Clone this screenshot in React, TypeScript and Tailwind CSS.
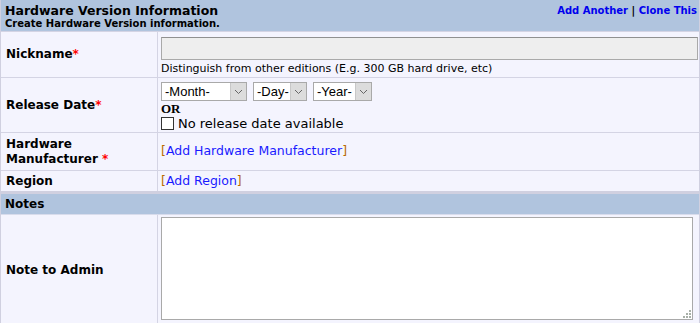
import React from "react";

const V = { fontFamily: '"DejaVu Sans", Verdana, sans-serif' };
const A = { fontFamily: '"Liberation Sans", Arial, sans-serif' };

function Sel({ label, w }: { label: string; w: number }) {
  return (
    <div className="flex h-[19px] border border-[#a9a9a9] bg-white" style={{ width: w }}>
      <div className="flex-1 pl-[3px] text-[13px] leading-[17px] text-black" style={A}>{label}</div>
      <div className="w-[16px] h-full bg-[#dcdcdc] border-l border-[#c8c8c8] flex items-center justify-center">
        <svg width="9" height="6" viewBox="0 0 9 6"><path d="M1 1 L4.5 4.5 L8 1" stroke="#666" strokeWidth="1" fill="none" /></svg>
      </div>
    </div>
  );
}

function Label({ children }: { children: React.ReactNode }) {
  return (
    <div className="w-[157px] shrink-0 border-r border-[#d4d4e4] flex items-center pl-[5px] text-[12px] font-bold text-black leading-[15px]" style={V}>
      {children}
    </div>
  );
}

const star = <span className="text-[#ff0000]">*</span>;

export default function App() {
  return (
    <div className="w-[700px] h-[323px] bg-[#f4f4fe] border-x border-[#d0d0e0] overflow-hidden" style={V}>
      <div className="h-[31px] bg-[#b0c4de] flex justify-between pl-[4px] pr-[2px] pt-[3px]">
        <div>
          <div className="text-[12.5px] font-bold leading-[15px] text-black">Hardware Version Information</div>
          <div className="text-[10px] font-bold leading-[12px] text-black">Create Hardware Version information.</div>
        </div>
        <div className="text-[10px] font-bold leading-[15px] text-black">
          <span className="text-[#0000ee]">Add Another</span> | <span className="text-[#0000ee]">Clone This</span>
        </div>
      </div>
      <div className="flex h-[46px] border-t border-[#d4d4e4]">
        <Label>Nickname{star}</Label>
        <div className="flex-1 pl-[3px] pr-[1px] pt-[5px]">
          <div className="h-[23px] bg-[#eeeeee] border border-[#a9a9a9] border-t-[#909090]" />
          <div className="text-[11px] leading-[13px] mt-[2px] text-black">Distinguish from other editions (E.g. 300 GB hard drive, etc)</div>
        </div>
      </div>
      <div className="flex h-[55px] border-t border-[#d4d4e4]">
        <Label>Release Date{star}</Label>
        <div className="flex-1 pl-[3px] pt-[4px]">
          <div className="flex gap-[6px]">
            <Sel label="-Month-" w={86} />
            <Sel label="-Day-" w={54} />
            <Sel label="-Year-" w={59} />
          </div>
          <div className="text-[13px] font-bold leading-[14px] mt-[1px] text-black" style={{ fontFamily: '"Liberation Serif", "Times New Roman", serif' }}>OR</div>
          <div className="flex items-center text-[13px] leading-[15px] text-black">
            <div className="w-[13px] h-[13px] border border-[#333] bg-white mr-[4px]" />
            No release date available
          </div>
        </div>
      </div>
      <div className="flex h-[38px] border-t border-[#d4d4e4]">
        <Label><span>Hardware<br />Manufacturer {star}</span></Label>
        <div className="flex-1 pl-[3px] flex items-center text-[12.5px] text-[#1a1aff]">
          <span className="text-[#b86a00]">[</span>Add Hardware Manufacturer<span className="text-[#b86a00]">]</span>
        </div>
      </div>
      <div className="flex h-[21px] border-t border-[#d4d4e4]">
        <Label>Region</Label>
        <div className="flex-1 pl-[3px] flex items-center text-[12.5px] text-[#1a1aff]">
          <span className="text-[#b86a00]">[</span>Add Region<span className="text-[#b86a00]">]</span>
        </div>
      </div>
      <div className="h-[3px] bg-[#d0d0e0]" />
      <div className="h-[21px] bg-[#b0c4de] border-b border-[#d8dcec] pl-[4px] flex items-center text-[12px] font-bold text-black">Notes</div>
      <div className="flex h-[110px]">
        <Label>Note to Admin</Label>
        <div className="flex-1 pl-[3px] pr-[6px] pt-[2px]">
          <div className="relative h-[103px] bg-white border border-[#a9a9a9]">
            <svg className="absolute right-[1px] bottom-[1px]" width="8" height="8" viewBox="0 0 8 8">
              <rect x="6" y="0" width="2" height="2" fill="#a8b0a8" />
              <rect x="3" y="3" width="2" height="2" fill="#a8b0a8" />
              <rect x="6" y="3" width="2" height="2" fill="#a8b0a8" />
              <rect x="0" y="6" width="2" height="2" fill="#a8b0a8" />
              <rect x="3" y="6" width="2" height="2" fill="#a8b0a8" />
              <rect x="6" y="6" width="2" height="2" fill="#a8b0a8" />
            </svg>
          </div>
        </div>
      </div>
    </div>
  );
}
